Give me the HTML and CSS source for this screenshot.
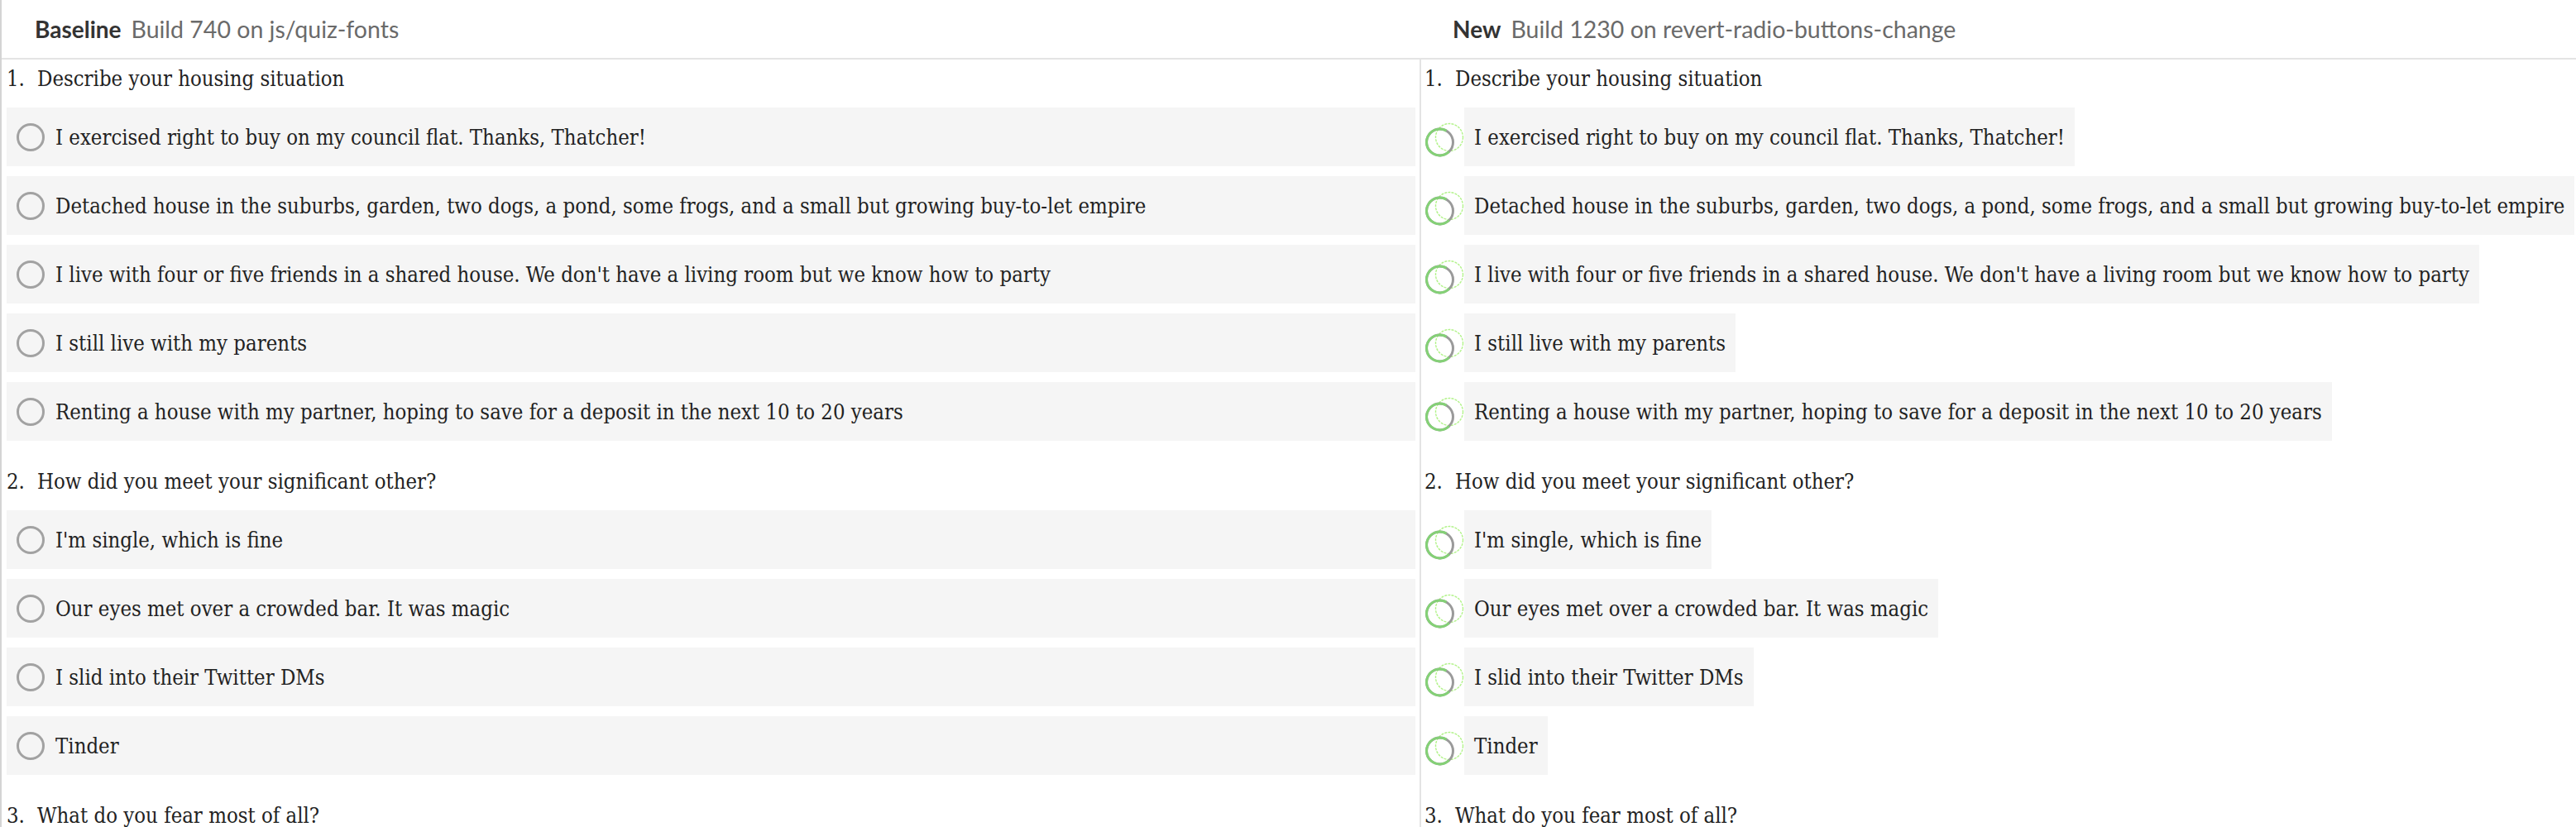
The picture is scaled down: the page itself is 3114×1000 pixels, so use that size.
FILE: index.html
```html
<!DOCTYPE html>
<html lang="en">
<head>
    <meta charset="UTF-8">
    <meta name="viewport" content="width=device-width, initial-scale=1.0">
    <title>Snapshot comparison</title>
    <link rel="stylesheet" href="styles.css">
</head>
<body>
    <div class="page">
        <header class="bar">
            <div class="bar-side">
                <span class="bar-label">Baseline</span>
                <span class="bar-build">Build 740 on js/quiz-fonts</span>
            </div>
            <div class="bar-side">
                <span class="bar-label">New</span>
                <span class="bar-build">Build 1230 on revert-radio-buttons-change</span>
            </div>
        </header>
        <main class="compare">
            <section class="shot shot-base" id="baseShot"></section>
            <section class="shot shot-new" id="newShot"></section>
        </main>
    </div>

    <script>
        const quiz = [
            {
                question: 'Describe your housing situation',
                answers: [
                    'I exercised right to buy on my council flat. Thanks, Thatcher!',
                    'Detached house in the suburbs, garden, two dogs, a pond, some frogs, and a small but growing buy-to-let empire',
                    "I live with four or five friends in a shared house. We don't have a living room but we know how to party",
                    'I still live with my parents',
                    'Renting a house with my partner, hoping to save for a deposit in the next 10 to 20 years'
                ]
            },
            {
                question: 'How did you meet your significant other?',
                answers: [
                    "I'm single, which is fine",
                    'Our eyes met over a crowded bar. It was magic',
                    'I slid into their Twitter DMs',
                    'Tinder'
                ]
            },
            {
                question: 'What do you fear most of all?',
                answers: []
            }
        ];

        // radio as drawn on the new build, with the changed pixels marked in green
        const diffRadio = `
            <svg class="radio-diff" width="48" height="48" viewBox="0 0 48 48">
                <circle cx="30" cy="24" r="16.5" fill="none" stroke="#b2f38a" stroke-width="1.4" stroke-dasharray="3 1.2"/>
                <circle cx="18.5" cy="30" r="16" fill="none" stroke="#9a9a9a" stroke-width="3"/>
                <path d="M 26.5 16.1 A 16 16 0 1 0 29.8 41.3" fill="none" stroke="#84d176" stroke-width="3"/>
            </svg>`;

        function renderQuiz(target, isNew) {
            let html = '';
            quiz.forEach((item, i) => {
                html += `<div class="question"><span class="question-num">${i + 1}.</span><span>${item.question}</span></div>`;
                item.answers.forEach(answer => {
                    if (isNew) {
                        html += `<div class="answer-row">${diffRadio}<div class="answer answer-fit">${answer}</div></div>`;
                    } else {
                        html += `<div class="answer"><span class="radio"></span><span>${answer}</span></div>`;
                    }
                });
            });
            document.getElementById(target).innerHTML = html;
        }

        renderQuiz('baseShot', false);
        renderQuiz('newShot', true);
    </script>
</body>
</html>
```

FILE: styles.css
```css
body {
    margin: 0;
    font-family: "DejaVu Serif Condensed", "DejaVu Serif", serif;
    font-stretch: condensed;
    color: #222;
    background: #fff;
}

.page {
    border-left: 2px solid #d4d4d4;
    min-height: 100vh;
}

.bar {
    display: grid;
    grid-template-columns: 1714px 1fr;
    height: 70px;
    border-bottom: 2px solid #e4e4e4;
    font-family: Lato, sans-serif;
    font-size: 28px;
}

.bar-side {
    display: flex;
    align-items: center;
    gap: 12px;
    padding-left: 40px;
}

.bar-label {
    font-weight: bold;
    color: #333;
}

.bar-build {
    font-size: 28.5px;
    color: #6a6a6a;
}

.compare {
    display: grid;
    grid-template-columns: 1714px 1fr;
}

.shot {
    padding: 0 5px 0 6px;
    font-size: 25.5px;
}

.shot-new {
    border-left: 2px solid #e4e4e4;
    padding-left: 4px;
}

.question {
    display: flex;
    line-height: 46px;
    margin: 26px 0 12px;
}

.question:first-child {
    margin-top: 0;
}

.question-num {
    width: 37px;
}

.answer {
    display: flex;
    align-items: center;
    gap: 13px;
    height: 71px;
    padding: 0 12px;
    margin-bottom: 12px;
    background: #f5f5f5;
}

.radio {
    width: 34px;
    height: 34px;
    box-sizing: border-box;
    border: 3px solid #a2a2a2;
    border-radius: 50%;
    flex-shrink: 0;
}

.answer-row {
    display: flex;
    align-items: center;
    margin-bottom: 12px;
}

.answer-row .answer {
    margin-bottom: 0;
}

.answer-fit {
    white-space: nowrap;
}

.radio-diff {
    flex-shrink: 0;
    display: block;
}
```
